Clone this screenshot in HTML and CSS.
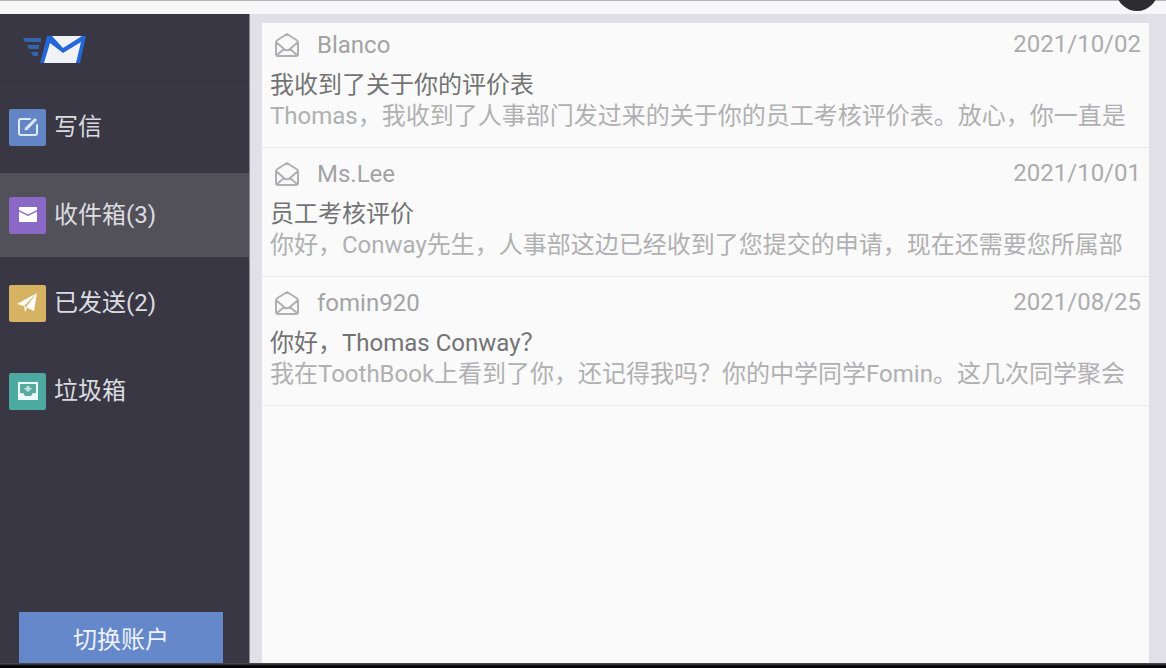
FILE: index.html
```html
<!DOCTYPE html>
<html lang="zh-CN">
<head>
<meta charset="utf-8">
<title>收件箱</title>
<link rel="stylesheet" href="styles.css">
</head>
<body>
<div class="app">
  <header class="topbar"><span class="knob"></span></header>
  <div class="body">
    <aside class="sidebar">
      <div class="brand">
        <svg class="logo" width="66" height="30" viewBox="0 0 66 30" aria-hidden="true">
          <path d="M1 4h18v4H3zM5 11h12v4H7zM9 18h7v4h-5z" fill="#3464ae"/>
          <path d="M25 2h39l-6 27H18z" fill="#2468d8"/>
          <path d="M30 2h30L41 14z" fill="#f1f2f5"/>
          <path d="M28 9l13 10L59 8l-5 21H22z" fill="#f1f2f5"/>
        </svg>
      </div>
      <nav class="nav">
        <a class="item" href="#write">
          <span class="tile blue"><svg width="24" height="24" viewBox="0 0 24 24" fill="none" stroke="#e1e9f9" stroke-width="2"><path d="M14 4H5a2 2 0 0 0-2 2v12a2 2 0 0 0 2 2h14a2 2 0 0 0 2-2v-8" stroke-linecap="round"/><path d="M11 13L20 4" stroke-width="3"/><path d="M8.500 15.500l1-4 3 3z" fill="#e1e9f9" stroke="none"/></svg></span>
          写信
        </a>
        <a class="item active" href="#inbox">
          <span class="tile purple"><svg width="24" height="24" viewBox="0 0 24 24" fill="#fff"><path d="M3 4h18v3l-9 4.500L3 7z"/><path d="M3 8.500l9 4.500 9-4.500V19H3z"/></svg></span>
          收件箱(3)
        </a>
        <a class="item" href="#sent">
          <span class="tile gold"><svg width="24" height="24" viewBox="0 0 24 24" fill="#fff"><path d="M1 13L21 2 8 15z"/><path d="M21 2l-3 18-8-4z"/><path d="M8 15l1 6 2-4z"/></svg></span>
          已发送(2)
        </a>
        <a class="item" href="#trash">
          <span class="tile teal"><svg width="24" height="24" viewBox="0 0 24 24"><path d="M2 3h20v18H2z" fill="#eefaf8"/><path d="M4 5h16v9h-3l-2 3H9l-2-3H4z" fill="#58aaa0"/><path d="M10.500 7h3v2h3L12 13 7.500 9h3z" fill="#c0e0dc"/></svg></span>
          垃圾箱
        </a>
      </nav>
      <button class="switch" type="button">切换账户</button>
    </aside>
    <main class="content">
      <div class="panel">
        <article class="mail">
          <div class="meta">
            <svg class="open" width="26" height="26" viewBox="0 0 26 26"><path d="M2 10.500Q2 9 3.500 8L13 2l9.500 6Q24 9 24 10.500V22a2 2 0 0 1-2 2H4a2 2 0 0 1-2-2zM2 10l8 7q3 2.500 6 0l8-7M3 23l7-6M23 23l-7-6"/></svg>
            <span class="from">Blanco</span>
            <time class="date" datetime="2021-10-02">2021/10/02</time>
          </div>
          <h2 class="subject">我收到了关于你的评价表</h2>
          <p class="preview">Thomas，我收到了人事部门发过来的关于你的员工考核评价表。放心，你一直是</p>
        </article>
        <article class="mail">
          <div class="meta">
            <svg class="open" width="26" height="26" viewBox="0 0 26 26"><path d="M2 10.500Q2 9 3.500 8L13 2l9.500 6Q24 9 24 10.500V22a2 2 0 0 1-2 2H4a2 2 0 0 1-2-2zM2 10l8 7q3 2.500 6 0l8-7M3 23l7-6M23 23l-7-6"/></svg>
            <span class="from">Ms.Lee</span>
            <time class="date" datetime="2021-10-01">2021/10/01</time>
          </div>
          <h2 class="subject">员工考核评价</h2>
          <p class="preview">你好，Conway先生，人事部这边已经收到了您提交的申请，现在还需要您所属部</p>
        </article>
        <article class="mail">
          <div class="meta">
            <svg class="open" width="26" height="26" viewBox="0 0 26 26"><path d="M2 10.500Q2 9 3.500 8L13 2l9.500 6Q24 9 24 10.500V22a2 2 0 0 1-2 2H4a2 2 0 0 1-2-2zM2 10l8 7q3 2.500 6 0l8-7M3 23l7-6M23 23l-7-6"/></svg>
            <span class="from">fomin920</span>
            <time class="date" datetime="2021-08-25">2021/08/25</time>
          </div>
          <h2 class="subject">你好，Thomas Conway？</h2>
          <p class="preview">我在ToothBook上看到了你，还记得我吗？你的中学同学Fomin。这几次同学聚会</p>
        </article>
      </div>
    </main>
  </div>
  <footer class="edge"></footer>
</div>
</body>
</html>
```
FILE: styles.css
```css
* { box-sizing: border-box; }
body {
  margin: 0;
  font: 24px/32px Roboto, "Noto Sans CJK SC", sans-serif;
  background: #e1e0e6;
}
.app {
  display: flex;
  flex-direction: column;
  height: 100vh;
  overflow: hidden;
}
.topbar {
  position: relative;
  flex: none;
  height: 14px;
  background: #f7f7f9;
  border-top: 1px solid #b4b4b6;
}
.knob {
  position: absolute;
  right: 8px;
  bottom: 3px;
  width: 42px;
  height: 42px;
  border-radius: 50%;
  background: #2d2d2f;
}
.body { flex: 1; display: flex; min-height: 0; }
.sidebar {
  flex: none;
  width: 250px;
  display: flex;
  flex-direction: column;
  background: #383743;
  border-right: 1px solid #8d8c95;
}
.brand {
  height: 68px;
  padding: 20px 22px;
  border-bottom: 1px solid #32313c;
}
.logo { display: block; }
.nav {
  display: flex;
  flex-direction: column;
  gap: 4px;
  padding-top: 3px;
}
.item {
  display: flex;
  align-items: center;
  gap: 8px;
  height: 84px;
  padding-left: 9px;
  color: #dcdce0;
  text-decoration: none;
}
.active { background: #525159; }
.tile {
  display: grid;
  place-items: center;
  width: 37px;
  height: 37px;
  border-radius: 2px;
}
.blue { background: #6285c6; }
.purple { background: #8a68c6; }
.gold { background: #d6b363; }
.teal { background: #4caaa0; }
.switch {
  height: 51px;
  margin: auto 26px 0 19px;
  padding: 4px 0 0;
  border: 0;
  background: #6588cb;
  color: #eef2fb;
  font: inherit;
}
.content {
  flex: 1;
  min-width: 0;
  padding: 9px 17px 0 12px;
}
.panel {
  height: 100%;
  background: #fafafa;
}
.mail {
  padding: 10px 8px 16px;
  border-bottom: 1px solid #ebebed;
}
.mail:first-child { padding-top: 6px; }
.meta {
  display: flex;
  align-items: center;
  height: 32px;
  margin-bottom: 8px;
  padding-left: 4px;
  color: #a3a3a5;
}
.open {
  margin-right: 17px;
  fill: none;
  stroke: #b0b0b2;
  stroke-width: 2;
  stroke-linejoin: round;
}
.date {
  align-self: flex-start;
  margin-left: auto;
  line-height: 30px;
  color: #acacae;
}
.subject, .preview {
  margin: 0;
  font-size: 24px;
  font-weight: 400;
  white-space: nowrap;
  overflow: hidden;
}
.subject { color: #737375; line-height: 32px; }
.preview { color: #b0b0b2; line-height: 30px; }
.edge { flex: none; height: 5px; background: linear-gradient(#55555a, #050507 60%); }
```
